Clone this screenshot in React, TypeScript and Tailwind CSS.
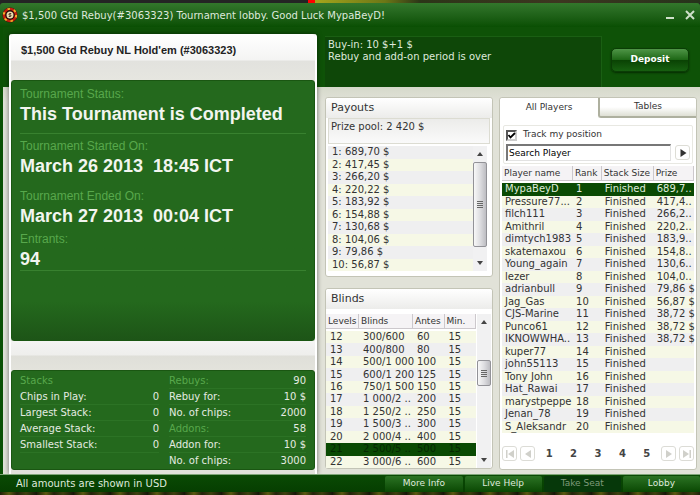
import { useState, type ReactNode } from "react";
import clsx from "clsx";

const payouts = [
  "1: 689,70 $",
  "2: 417,45 $",
  "3: 266,20 $",
  "4: 220,22 $",
  "5: 183,92 $",
  "6: 154,88 $",
  "7: 130,68 $",
  "8: 104,06 $",
  "9: 79,86 $",
  "10: 56,87 $",
];

const levels = [
  ["12", "300/600", "60"],
  ["13", "400/800", "80"],
  ["14", "500/1 000", "100"],
  ["15", "600/1 200", "125"],
  ["16", "750/1 500", "150"],
  ["17", "1 000/2 ..", "200"],
  ["18", "1 250/2 ..", "250"],
  ["19", "1 500/3 ..", "300"],
  ["20", "2 000/4 ..", "400"],
  ["21", "2 500/5 ..", "500"],
  ["22", "3 000/6 ..", "600"],
];

const players = [
  ["MypaBeyD", "689,7.."],
  ["Pressure77...", "417,4.."],
  ["filch111", "266,2.."],
  ["Amithril", "220,2.."],
  ["dimtych1983", "183,9.."],
  ["skatemaxou", "154,8.."],
  ["Young_again", "130,6.."],
  ["lezer", "104,0.."],
  ["adrianbull", "79,86 $"],
  ["Jag_Gas", "56,87 $"],
  ["CJS-Marine", "38,72 $"],
  ["Punco61", "38,72 $"],
  ["IKNOWWHA..", "38,72 $"],
  ["kuper77", ""],
  ["john55113", ""],
  ["Tony John", ""],
  ["Hat_Rawai", ""],
  ["marystpeppe", ""],
  ["Jenan_78", ""],
  ["S_Aleksandr", ""],
];

const stacks = ["Chips in Play:", "Largest Stack:", "Average Stack:", "Smallest Stack:"];

const extras = [
  ["Rebuys:", "90"],
  ["Rebuy for:", "10 $"],
  ["No. of chips:", "2000"],
  ["Addons:", "58"],
  ["Addon for:", "10 $"],
  ["No. of chips:", "3000"],
];

function ChipLogo() {
  return (
    <svg viewBox="0 0 16 16" className="h-4 w-4">
      <circle cx="8" cy="8" r="7.5" fill="#4a0c06" />
      <circle cx="8" cy="8" r="5.8" fill="none" stroke="#c4200f" strokeWidth="2.8" />
      <circle cx="8" cy="8" r="6.2" fill="none" stroke="#efb92a" strokeWidth="1.8" strokeDasharray="2.4 4.09" />
      <circle cx="8" cy="8" r="4.7" fill="#1c0805" />
      <circle cx="8" cy="8" r="3.5" fill="#e9dcae" />
      <path d="M9.2 6.6H7.6c-.9 0-.9 1.3 0 1.4h.8c.9.1.9 1.4 0 1.4H6.8" fill="none" stroke="#2a0a05" strokeWidth=".9" />
    </svg>
  );
}

function Panel({ title, children }: { title: string; children: ReactNode }) {
  return (
    <section className="rounded-[3px] border border-[#c3c4b6] bg-white">
      <h2 className="h-5 rounded-t-[3px] bg-linear-to-b from-white to-[#ececea] px-[5px] pt-[3px] text-[11px] leading-[14px]">{title}</h2>
      {children}
    </section>
  );
}

function Scrollbar({ thumb }: { thumb: string }) {
  return (
    <div className="flex w-[14px] shrink-0 flex-col items-center bg-[#f1f1f2]">
      <button aria-label="Scroll up" className="flex h-4 w-full shrink-0 items-center justify-center">
        <svg viewBox="0 0 6 4" className="h-1 w-1.5"><path d="M0 4 3 0l3 4z" fill="#444" /></svg>
      </button>
      <div className="flex w-full flex-1 flex-col">
        <div className={clsx("flex w-full items-center justify-center rounded-[2px] border border-[#929297] bg-linear-to-r from-[#f8f8f8] via-[#dedee1] to-[#bdbdc2]", thumb)}>
          <svg viewBox="0 0 6 7" className="h-[7px] w-1.5"><path d="M0 .5h6M0 2.5h6M0 4.5h6M0 6.5h6" stroke="#666" /></svg>
        </div>
      </div>
      <button aria-label="Scroll down" className="flex h-4 w-full shrink-0 items-center justify-center">
        <svg viewBox="0 0 6 4" className="h-1 w-1.5"><path d="M0 0h6L3 4z" fill="#444" /></svg>
      </button>
    </div>
  );
}

function StatusItem({ label, value, className }: { label: string; value: string; className?: string }) {
  return (
    <div className={clsx("mx-2", className)}>
      <dt className="text-[12px] leading-4 text-[#58a84c]">{label}</dt>
      <dd className="text-[18px] leading-[25px] font-bold whitespace-pre text-[#f2f5ef]">{value}</dd>
    </div>
  );
}

function TournamentPanel() {
  return (
    <section className="mt-[7px] flex flex-col rounded-t-[3px] border-x-2 border-white bg-[#e1e2db] pb-1 shadow-[0_0_5px_#00000088]">
      <h1 className="h-[46px] rounded-t-[3px] bg-[linear-gradient(#fff,#f4f4f3_26px,#e2e2de_27px,#e6e6e0)] px-[10px] pt-2 font-['Liberation_Sans',sans-serif] text-[11px] leading-4 font-bold text-[#222]">
        $1,500 Gtd Rebuy NL Hold'em (#3063323)
      </h1>
      <dl className="h-[261px] rounded-[3px] border border-[#1a5612] bg-linear-to-b from-[#24691d] from-85% to-[#1d5517] pt-[5px] font-['Liberation_Sans',sans-serif]">
        <StatusItem label="Tournament Status:" value="This Tournament is Completed" className="h-12 border-b border-[#38812f]" />
        <StatusItem label="Tournament Started On:" value="March 26 2013  18:45 ICT" className="h-[50px] pt-1" />
        <StatusItem label="Tournament Ended On:" value="March 27 2013  00:04 ICT" className="h-[43px] pt-1" />
        <StatusItem label="Entrants:" value="94" className="h-11 border-b border-[#38812f] pt-1" />
      </dl>
      <div className="h-[29px] bg-[linear-gradient(#f4f4f3,#eeeeec_14px,#dfdfd9_15px,#e3e3dc)]" />
      <div className="grid grid-cols-[139fr_137fr] gap-x-[10px] rounded-[3px] border border-[#1a5612] bg-[#24691d] px-2 pt-[2px] pb-px text-[10px] leading-4 text-[#e4ebe1]">
        <div>
          <p className="text-[#58a84c]">Stacks</p>
          {stacks.map((label) => (
            <p key={label} className="flex justify-between border-b border-[#2c7325] leading-[15px]">
              <span>{label}</span>
              <span>0</span>
            </p>
          ))}
        </div>
        <div>
          {extras.map(([label, value], i) => (
            <p key={i} className="flex justify-between border-b border-[#2c7325] leading-[15px] last:border-0">
              <span className={clsx(i % 3 === 0 && "text-[#58a84c]")}>{label}</span>
              <span>{value}</span>
            </p>
          ))}
        </div>
      </div>
    </section>
  );
}

function PayoutsPanel() {
  return (
    <Panel title="Payouts">
      <p className="mx-0.5 h-[26px] border border-[#dcdcd2] bg-linear-to-b from-[#ececea] to-[#fafafa] px-0.5 text-[10px] leading-[15px]">Prize pool: 2 420 $</p>
      <div className="mt-0.5 mr-[5px] mb-[5px] ml-0.5 flex">
        <ol className="grid h-[125px] flex-1 grid-rows-10 text-[10px] leading-3">
          {payouts.map((line) => (
            <li key={line} className="px-1 odd:bg-[#efeff0] even:bg-[#f6f8e6]">{line}</li>
          ))}
        </ol>
        <Scrollbar thumb="h-[85px]" />
      </div>
    </Panel>
  );
}

const headCell = "border-r border-b border-[#ccc8cc] bg-[#f5f3f5] text-left text-[9px] leading-[13px] font-normal";

function BlindsPanel() {
  return (
    <Panel title="Blinds">
      <div className="mt-[5px] flex gap-px pr-px">
        <div className="min-w-0 flex-1">
          <table className="w-full table-fixed border-separate border-spacing-0 text-[10px] leading-3 whitespace-nowrap">
            <colgroup>
              <col className="w-[22%]" />
              <col className="w-[36%]" />
              <col className="w-[21%]" />
              <col className="w-[21%]" />
            </colgroup>
            <thead>
              <tr className="h-[15px]">
                {["Levels", "Blinds", "Antes", "Min."].map((h) => (
                  <th key={h} className={clsx(headCell, "pl-0.5")}>{h}</th>
                ))}
              </tr>
            </thead>
          </table>
          <table className="mt-0.5 h-[137px] w-full table-fixed border-separate border-spacing-0 text-[10px] leading-3 whitespace-nowrap">
            <colgroup>
              <col className="w-[22%]" />
              <col className="w-[36%]" />
              <col className="w-[21%]" />
              <col className="w-[21%]" />
            </colgroup>
            <tbody>
              {levels.map(([level, blinds, ante]) => (
                <tr key={level} className={level === "21" ? "bg-[#0a4a03] text-[#052802]" : "odd:bg-[#f6f8e6] even:bg-[#efeff0]"}>
                  <td className="py-0 pl-1">{level}</td>
                  <td className="py-0 pl-1">{blinds}</td>
                  <td className="py-0 pl-1">{ante}</td>
                  <td className="py-0 pl-1">15</td>
                </tr>
              ))}
            </tbody>
          </table>
        </div>
        <Scrollbar thumb="mt-[30px] h-[26px]" />
      </div>
    </Panel>
  );
}

function PagerArrow({ label, d }: { label: string; d: string }) {
  return (
    <button aria-label={label} className="flex h-[15px] w-[15px] items-center justify-center rounded-[3px] border border-[#dcdcd6] bg-white">
      <svg viewBox="0 0 8 8" className="h-2 w-2"><path d={d} fill="#d0d0ca" /></svg>
    </button>
  );
}

function PlayersPanel() {
  const [tracking, setTracking] = useState(true);
  const [query, setQuery] = useState("Search Player");

  return (
    <section className="flex flex-col rounded-[3px] border border-[#c3c4b6] bg-white">
      <div role="tablist" className="grid h-5 grid-cols-2 text-[9px]">
        <button role="tab" aria-selected="true" className="rounded-t-[3px] bg-white">All Players</button>
        <button role="tab" aria-selected="false" className="rounded-tr-[3px] rounded-bl-[3px] border-b-2 border-l-2 border-[#aeb09f] bg-linear-to-b from-white from-50% to-[#dedfd4]">Tables</button>
      </div>
      <div className="mx-[3px] mt-[7px] h-[39px] rounded-[2px] border border-[#e8e8e2] px-0.5">
        <label className="flex h-[18px] items-center gap-1.5 text-[9px]">
          <span className="relative flex h-[11px] w-[11px]">
            <input
              type="checkbox"
              checked={tracking}
              onChange={(e) => setTracking(e.target.checked)}
              className="h-[11px] w-[11px] appearance-none border-2 border-[#555] border-r-[#ccc] border-b-[#ccc] bg-white"
            />
            {tracking && (
              <svg viewBox="0 0 11 11" className="pointer-events-none absolute inset-0"><path d="M2.5 5 4.5 7.5 9 3" fill="none" stroke="#000" strokeWidth="1.8" /></svg>
            )}
          </span>
          Track my position
        </label>
        <div className="flex items-center gap-1">
          <input
            aria-label="Search Player"
            value={query}
            onChange={(e) => setQuery(e.target.value)}
            className="h-[17px] min-w-0 flex-1 border border-t-2 border-l-2 border-[#e2e2e2] border-t-[#777] border-l-[#777] bg-white px-px text-[9px] text-black"
          />
          <button aria-label="Search" className="flex h-[15px] w-[15px] items-center justify-center rounded-[3px] border border-[#ddddd6]">
            <svg viewBox="0 0 8 8" className="h-2 w-2"><path d="M1.5 0 7.5 4l-6 4z" fill="#333" /></svg>
          </button>
        </div>
      </div>
      <div className="mx-0.5 mt-[2px]">
        <table className="w-full table-fixed border-separate border-spacing-0">
          <colgroup>
            <col className="w-[37%]" />
            <col className="w-[15%]" />
            <col className="w-[27%]" />
            <col className="w-[21%]" />
          </colgroup>
          <thead>
            <tr className="h-[15px]">
              {["Player name", "Rank", "Stack Size", "Prize"].map((h) => (
                <th key={h} className={clsx(headCell, "pl-0.5 whitespace-nowrap")}>{h}</th>
              ))}
            </tr>
          </thead>
        </table>
        <table className="mt-0.5 h-[250px] w-full table-fixed border-separate border-spacing-0 text-[10px] leading-3 whitespace-nowrap">
          <colgroup>
            <col className="w-[37%]" />
            <col className="w-[15%]" />
            <col className="w-[27%]" />
            <col className="w-[21%]" />
          </colgroup>
          <tbody>
            {players.map(([name, prize], i) => (
              <tr key={name} className={i === 0 ? "bg-[#0a4a03] text-[#dfeadb]" : "odd:bg-[#efeff0] even:bg-[#f6f8e6]"}>
                <td className="py-0 pl-[3px]">{name}</td>
                <td className="py-0 pl-[3px]">{i + 1}</td>
                <td className="py-0 pl-[3px]">Finished</td>
                <td className="py-0 pl-[3px]">{prize}</td>
              </tr>
            ))}
          </tbody>
        </table>
      </div>
      <nav aria-label="Pages" className="mx-0.5 mt-[13px] flex items-center justify-between text-[10px] font-bold text-[#444]">
        <div className="flex gap-[3px]">
          <PagerArrow label="First page" d="M0 0h1.5v8H0zM8 0v8L2 4z" />
          <PagerArrow label="Previous page" d="M7 0v8L1 4z" />
        </div>
        <div className="flex flex-1 justify-around px-0.5">
          {[1, 2, 3, 4, 5].map((page) => (
            <button key={page}>{page}</button>
          ))}
        </div>
        <div className="flex gap-[3px]">
          <PagerArrow label="Next page" d="M1 0v8l6-4z" />
          <PagerArrow label="Last page" d="M0 0v8l6-4zM6.5 0H8v8H6.5z" />
        </div>
      </nav>
    </section>
  );
}

export default function App() {
  return (
    <div className="flex min-h-screen flex-col bg-[#232220] font-['DejaVu_Sans',sans-serif] text-[10px] text-[#333]">
      <div className="h-[3px] bg-[linear-gradient(90deg,#242424_44%,#f00_44%,#f00_45%,#a5a51c_45%,#6c7716_55%,#2c3518_60%,#3d3620_80%,#26331b)]" />

      <header className="flex h-6 items-center gap-1 rounded-t-[3px] bg-linear-to-b from-[#33772c] to-[#094f03] px-0.5">
        <ChipLogo />
        <p className="flex-1 text-[10px] text-[#dfe9dc]">$1,500 Gtd Rebuy(#3063323) Tournament lobby. Good Luck MypaBeyD!</p>
        <button aria-label="Minimize" className="flex h-4 w-4 items-center justify-center">
          <svg viewBox="0 0 10 10" className="h-2.5 w-2.5"><path d="M1 8h8" stroke="#cfe0ca" strokeWidth="2" /></svg>
        </button>
        <button aria-label="Close" className="flex h-4 w-4 items-center justify-center">
          <svg viewBox="0 0 10 10" className="h-2.5 w-2.5"><path d="m1 1 8 8M9 1 1 9" stroke="#cfe0ca" strokeWidth="2" /></svg>
        </button>
      </header>

      <main className="grid flex-1 grid-cols-[308fr_372fr] gap-x-2 border-l-[3px] border-[#0b5104] bg-[linear-gradient(#0e5207_60px,#d6d9cb_60px,#e1e2d8_75px)] pr-[3px] pl-1.5">
        <TournamentPanel />
        <div className="flex flex-col">
          <div className="flex h-[60px] items-center justify-between pt-[9px] pr-2">
            <div className="h-full w-[76%] border-t border-r border-[#1a5f13] bg-[#0e4708] px-[3px] pt-0.5 text-[10px] leading-3 text-[#dfe9dc]">
              <p>Buy-in: 10 $+1 $</p>
              <p>Rebuy and add-on period is over</p>
            </div>
            <button className="mb-1 h-6 w-[78px] rounded-[5px] border border-[#0a3d05] bg-[linear-gradient(#4f9547,#1c6614_50%,#0a4304_52%,#176010)] text-[9px] font-bold text-white shadow-[0_1px_2px_#062c02]">
              Deposit
            </button>
          </div>
          <div className="mt-2.5 mb-1 grid flex-1 grid-cols-[168fr_198fr] gap-x-1.5">
            <div className="flex flex-col gap-[11px]">
              <PayoutsPanel />
              <BlindsPanel />
            </div>
            <PlayersPanel />
          </div>
        </div>
      </main>

      <footer className="flex h-[18px] items-center border-t border-[#7fa678] bg-linear-to-b from-[#0a4a04] to-[#063e01] pl-4 text-[10px] text-[#dfe9dc]">
        <p className="flex-1">All amounts are shown in USD</p>
        <nav className="grid h-full w-[46%] grid-cols-4 gap-x-0.5 pt-px text-[9px]">
          {["More Info", "Live Help", "Take Seat", "Lobby"].map((item) => (
            <button
              key={item}
              disabled={item === "Take Seat"}
              className="rounded-t-[2px] bg-linear-to-b from-[#2b7323] to-[#094803] disabled:bg-[#06380a] disabled:bg-none disabled:text-[#7d9a79]"
            >
              {item}
            </button>
          ))}
        </nav>
      </footer>
      <div className="h-[5px] bg-[repeating-linear-gradient(90deg,#1d1f08_0,#5a5a10_9px,#23230c_17px,#3e420e_26px,#15160a_37px)]" />
    </div>
  );
}
